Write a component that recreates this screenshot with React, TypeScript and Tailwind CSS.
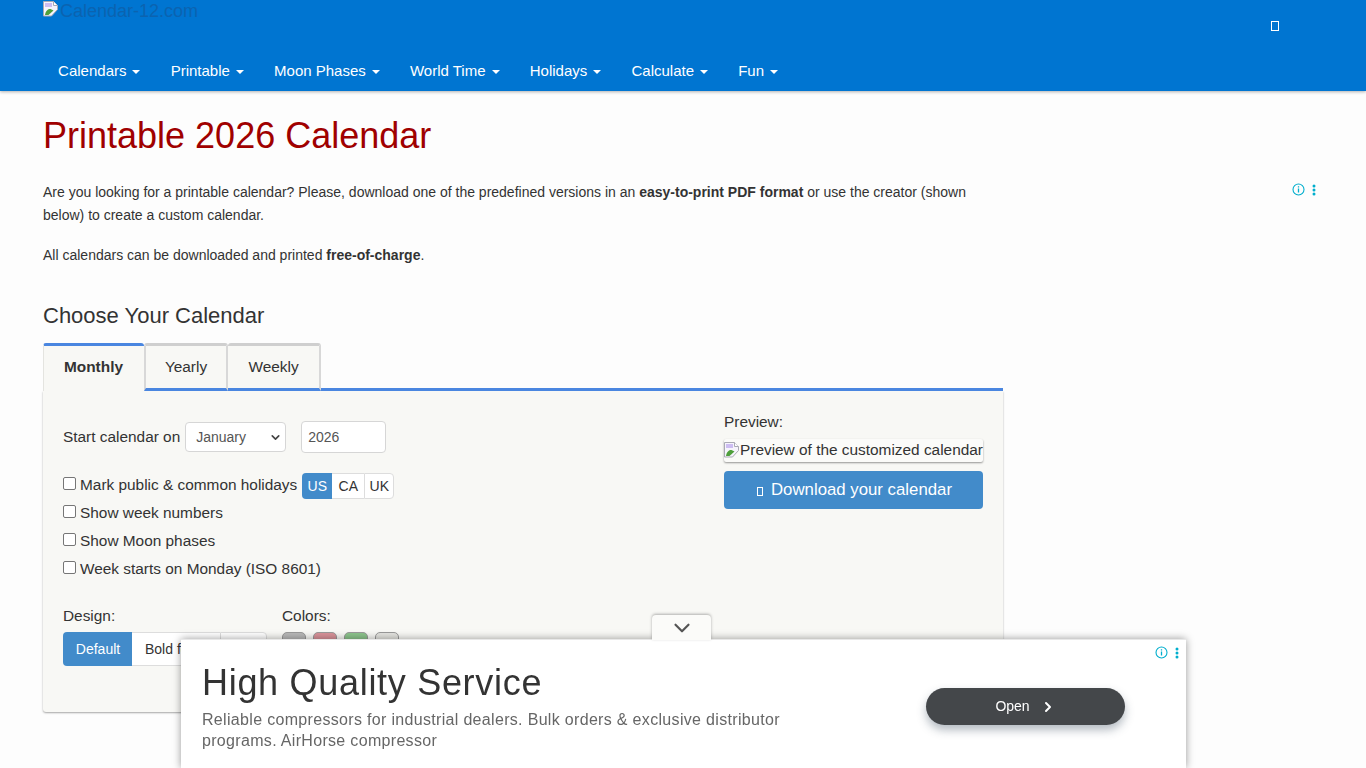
import { ChevronDown, ChevronRight } from "lucide-react"

const menu = ["Calendars", "Printable", "Moon Phases", "World Time", "Holidays", "Calculate", "Fun"]

function BrokenImage() {
  return (
    <svg width="16" height="16" viewBox="0 0 16 16" className="shrink-0">
      <path d="M.5.5h10l4 4v4l-6 6.500H.5z" fill="#f6f4fc" stroke="#a9a9b4" strokeWidth="1" />
      <path d="M10.500.5v4h4" fill="#fff" stroke="#a9a9b4" strokeWidth="1" />
      <path d="M2 14c.5-4 3-6.500 5.500-6l3 1.500-5 4.500z" fill="#4f9f3c" />
      <path d="M2 2h7v4H2z" fill="#cdbdf2" />
    </svg>
  )
}

function AdInfo() {
  return (
    <div className="flex items-center gap-[7px] text-[#00aecd]">
      <svg width="13" height="13" viewBox="0 0 13 13" fill="none" stroke="currentColor">
        <circle cx="6.500" cy="6.500" r="5.500" strokeWidth="1.100" />
        <path d="M6.500 5.600v4M6.500 3.200v1.200" strokeWidth="1.300" />
      </svg>
      <svg width="4" height="12" viewBox="0 0 4 12" fill="currentColor">
        <circle cx="2" cy="2" r="1.500" />
        <circle cx="2" cy="6" r="1.500" />
        <circle cx="2" cy="10" r="1.500" />
      </svg>
    </div>
  )
}

function Check({ label }: { label: string }) {
  return (
    <label className="flex items-center h-7 text-[15.4px] text-[#333]">
      <span className="w-[13px] h-[13px] mr-[4px] -mt-[3px] rounded-[2px] border border-[#767676] bg-white" />
      {label}
    </label>
  )
}

export default function App() {
  return (
    <div className="relative h-screen overflow-hidden bg-[#fdfdfd] font-['Liberation_Sans',Arial,sans-serif] text-[#333]">
      <header className="h-[91px] bg-[#0075d1] shadow-[0_1px_3px_rgba(0,0,0,0.3)] flex flex-col justify-between">
        <div className="flex justify-between pl-[43px] pr-[87px]">
          <div className="flex items-start text-[18px] leading-[20px] pt-[1px] text-[#0b63b0]">
            <BrokenImage />
            <span className="ml-[1px]">Calendar-12.com</span>
          </div>
          <div className="mt-[21px] w-[8px] h-[10px] border border-white" />
        </div>
        <nav className="flex pl-[43px] h-10 items-center">
          {menu.map((m) => (
            <a key={m} className="flex items-center px-[15.1px] text-[15px] text-white whitespace-nowrap">
              {m}
              <span className="ml-[6px] mt-[2px] w-0 h-0 border-x-[4px] border-x-transparent border-t-[4px] border-t-white" />
            </a>
          ))}
        </nav>
      </header>

      <main className="w-[960px] ml-[43px]">
        <h1 className="text-[36px] leading-[40px] mt-[25px] text-[#a00000]">Printable 2026 Calendar</h1>
        <div className="text-[14px] leading-[23px] mt-[25px]">
          <p>
            Are you looking for a printable calendar? Please, download one of the predefined versions in an{" "}
            <b>easy-to-print PDF format</b> or use the creator (shown below) to create a custom calendar.
          </p>
          <p className="mt-[17px]">
            All calendars can be downloaded and printed <b>free-of-charge</b>.
          </p>
        </div>
        <h2 className="text-[22px] leading-[26px] mt-[36px]">Choose Your Calendar</h2>

        <div className="flex mt-[14px] h-[48px] text-[15.4px]">
          <div className="w-[101px] pb-[3px] pr-[1px] border-t-[3px] border-t-[#4a86e0] border-l border-l-[#e4e4e0] bg-[#f8f8f5] font-bold flex items-center justify-center rounded-t-[3px]">
            Monthly
          </div>
          <div className="w-[84px] border-t-[3px] border-t-[#cfcfcf] border-x-2 border-x-[#d8d8d8] border-b-[3px] border-b-[#4a86e0] bg-[#f8f8f5] flex items-center justify-center rounded-t-[3px]">
            Yearly
          </div>
          <div className="w-[93px] border-t-[3px] border-t-[#cfcfcf] border-r-2 border-r-[#d8d8d8] border-b-[3px] border-b-[#4a86e0] bg-[#f8f8f5] flex items-center justify-center rounded-t-[3px]">
            Weekly
          </div>
          <div className="flex-1 border-b-[3px] border-b-[#4a86e0] rounded-tr-[3px]" />
        </div>

        <section className="h-[321px] bg-[#f8f8f5] rounded-b-[3px] shadow-[0_1px_2px_rgba(0,0,0,0.35)] pl-5 pr-5 flex justify-between">
          <div className="pt-[30px]">
            <div className="flex items-center text-[15.4px] h-8">
              <span>Start calendar on</span>
              <div className="ml-[5px] w-[101px] h-[30px] bg-white border border-[#d6d6d6] rounded-[4px] flex items-center justify-between pl-[10px] pr-[3px] text-[14px] text-[#555]">
                January
                <ChevronDown size={13} strokeWidth={3} className="text-[#444]" />
              </div>
              <div className="ml-[15px] w-[85px] h-8 bg-white border border-[#d6d6d6] rounded-[4px] flex items-center pl-[6px] text-[14px] text-[#555]">
                2026
              </div>
            </div>
            <div className="mt-[18px]">
              <div className="flex items-center">
                <Check label="Mark public &amp; common holidays" />
                <div className="flex ml-[5px] mt-[2px] h-[26px] text-[14px]">
                  <div className="w-[30px] bg-[#428bca] text-white rounded-l-[4px] flex items-center justify-center">US</div>
                  <div className="w-[32px] bg-white border-y border-[#ddd] flex items-center justify-center">CA</div>
                  <div className="w-[30px] bg-white border border-[#ddd] rounded-r-[4px] flex items-center justify-center">UK</div>
                </div>
              </div>
              <Check label="Show week numbers" />
              <Check label="Show Moon phases" />
              <Check label="Week starts on Monday (ISO 8601)" />
            </div>
            <div className="flex mt-[23px] text-[15.4px]">
              <div className="w-[219px]">
                <div className="leading-[20px]">Design:</div>
                <div className="flex mt-[6px] h-[34px] text-[14px]">
                  <div className="w-[69px] pl-[1px] bg-[#428bca] text-white rounded-l-[4px] flex items-center justify-center">Default</div>
                  <div className="w-[88px] bg-white border-y border-[#ddd] pl-[13px] flex items-center whitespace-nowrap overflow-hidden">Bold fonts</div>
                  <div className="w-[47px] bg-white border border-[#ddd] rounded-r-[4px]" />
                </div>
              </div>
              <div>
                <div className="leading-[20px]">Colors:</div>
                <div className="flex gap-[7px] mt-[6px]">
                  <div className="w-6 h-6 rounded-[5px] border border-[#999] bg-[#b9b9b9]" />
                  <div className="w-6 h-6 rounded-[5px] border border-[#999] bg-[#d9939a]" />
                  <div className="w-6 h-6 rounded-[5px] border border-[#999] bg-[#8cc48c]" />
                  <div className="w-6 h-6 rounded-[5px] border border-[#999] bg-[#e4e4e0]" />
                </div>
              </div>
            </div>
          </div>

          <div className="w-[259px] pt-[21px] text-[15.4px]">
            <div className="leading-[20px]">Preview:</div>
            <div className="flex items-center h-[23px] mt-[7px] pb-[2px] rounded-[2px] shadow-[0_1px_2px_rgba(0,0,0,0.4)] bg-[#fbfbf9] whitespace-nowrap text-[#333] leading-[20px]">
              <BrokenImage />
              <span>Preview of the customized calendar</span>
            </div>
            <div className="mt-[9px] h-[38px] pl-[2px] rounded-[4px] bg-[#428bca] text-white text-[16.8px] flex items-center justify-center">
              <span className="w-[6px] h-[9px] border border-white mr-[8px] mt-[2px]" />
              Download your calendar
            </div>
          </div>
        </section>
      </main>

      <div className="absolute right-[50px] top-[183px]">
        <AdInfo />
      </div>

      <div className="fixed left-[181px] bottom-0 w-[1005px] h-[129px] bg-white border-t border-[#e8e8e8] shadow-[0_0_8px_rgba(0,0,0,0.4)] pl-[21px] flex">
        <div className="absolute left-[471px] -top-[25px] w-[59px] h-[25px] bg-[#fbfbf9] rounded-t-[4px] shadow-[0_-1px_3px_rgba(0,0,0,0.3)] flex items-center justify-center">
          <ChevronDown size={26} strokeWidth={2} className="text-[#555]" />
        </div>
        <div className="absolute right-[7px] top-[6px]">
          <AdInfo />
        </div>
        <div className="w-[610px] pt-[20px]">
          <div className="text-[36px] leading-[46px] tracking-[0.7px] text-[#333]">High Quality Service</div>
          <div className="mt-[3px] text-[16px] leading-[21px] tracking-[0.32px] text-[#666]">
            Reliable compressors for industrial dealers. Bulk orders &amp; exclusive distributor programs. AirHorse compressor
          </div>
        </div>
        <div className="ml-[114px] mt-[48px] w-[199px] h-[37px] rounded-full bg-[#44474a] text-white shadow-[0_5px_10px_rgba(40,60,80,0.35)] flex items-center justify-center text-[14px]">
          Open
          <ChevronRight size={16} strokeWidth={3} className="ml-[10px]" />
        </div>
      </div>
    </div>
  )
}
